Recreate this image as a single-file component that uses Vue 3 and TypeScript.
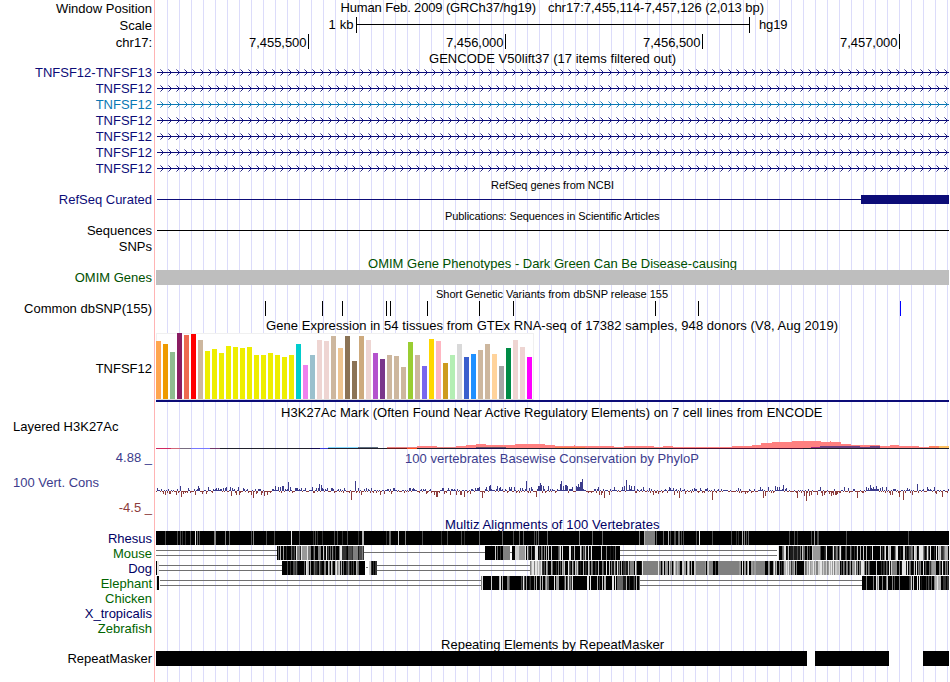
<script setup lang="ts">
type Block = [from: number, to: number, shades: string];

interface Species {
  name: string;
  color: string;
  blocks: Block[];
  double: [number, number][];
  single: [number, number][];
  marks: string;
}

const left = 156;
const right = 949;

const navy = "#0c0c78";
const green = "#005000";

// Cheap repeatable generator, so that the fine-grained tracks are stable between renders
function random(seed: number) {
  let s = seed;
  return () => {
    s = (s * 1103515245 + 12345) % 2147483648;
    return s / 2147483648;
  };
}

const genes = [
  { name: "TNFSF12-TNFSF13", color: navy },
  { name: "TNFSF12", color: "#0a78b4" },
  { name: "TNFSF12", color: navy },
];
const geneRows = [genes[0], genes[2], genes[1], genes[2], genes[2], genes[2], genes[2]];

const arrowTips = Array.from({ length: 99 }, (_, i) => 162 + i * 8);
const arrowHeads = arrowTips.map((x) => `M${x - 1} 6h1v1h-1zM${x} 7h1v1h-1zM${x} 9h1v1h-1zM${x - 1} 10h1v1h-1z`).join("");
const arrowTails = arrowTips.map((x) => `M${x - 2} 5h1v1h-1zM${x - 2} 11h1v1h-1z`).join("");

const rulerTicks = [
  { x: 308, label: "7,455,500" },
  { x: 505, label: "7,456,000" },
  { x: 702, label: "7,456,500" },
  { x: 899, label: "7,457,000" },
];

const snps = [265, 322, 342, 386, 390, 427, 479, 513, 655, 698];

const tissues = [
  "ffa54f:58", "ee9a00:55", "8fbc8f:47", "8b1c62:66", "ee6a50:64", "ff0000:65", "cdb79e:59",
  "eeee00:48", "eeee00:50", "eeee00:46", "eeee00:53", "eeee00:52", "eeee00:51", "eeee00:52",
  "eeee00:44", "eeee00:44", "eeee00:46", "eeee00:44", "eeee00:42", "eeee00:44", "00cdcd:55",
  "ee82ee:34", "9ac0cd:44", "eed5d2:59", "eed5d2:58", "cdb79e:63", "eec591:51", "8b7355:63",
  "8b7355:38", "cdaa7d:63", "eed5d2:59", "b452cd:46", "7a378b:40", "cdb79e:44", "cdb79e:43",
  "cdb79e:32", "9acd32:57", "cdb79e:44", "7a67ee:33", "ffd700:60", "ffb6c1:58", "cd9b1d:36",
  "b4eeb4:44", "d9d9d9:55", "3a5fcd:42", "1e90ff:45", "cdb79e:49", "cdb79e:55", "ffd39b:45",
  "a6a6a6:33", "008b45:51", "eed5d2:59", "eed5d2:52", "ff00ff:42",
].map((item, i) => {
  const [color, height] = item.split(":");
  return { x: left + i * 7, color: "#" + color, height: Number(height) };
});

// x, y, width, height, colour
const histone: [number, number, number, number, string][] = [
  [387, 29, 30, 1, "#e88080"],
  [417, 28, 20, 2, "#ff8080"],
  [437, 29, 19, 1, "#e88080"],
  [456, 28, 10, 2, "#ff8080"],
  [466, 27, 10, 3, "#ff8080"],
  [476, 26, 10, 4, "#ff8080"],
  [486, 27, 29, 3, "#ff8080"],
  [515, 26, 30, 4, "#ff8080"],
  [545, 27, 10, 3, "#ff8080"],
  [555, 28, 59, 2, "#ff8080"],
  [574, 27, 1, 1, "#ff8080"],
  [614, 29, 10, 1, "#ff8080"],
  [624, 28, 30, 2, "#ff8080"],
  [654, 29, 9, 1, "#ff8080"],
  [663, 28, 10, 2, "#ff8080"],
  [673, 29, 59, 1, "#ff8080"],
  [732, 28, 20, 2, "#ff8080"],
  [752, 27, 9, 3, "#ff8080"],
  [761, 25, 11, 5, "#ff8080"],
  [772, 24, 20, 6, "#ff8080"],
  [792, 23, 29, 7, "#ff8080"],
  [821, 24, 20, 6, "#ff8080"],
  [830, 23, 1, 1, "#ff8080"],
  [841, 26, 10, 4, "#ff8080"],
  [851, 27, 29, 3, "#ff8080"],
  [880, 28, 10, 2, "#ff8080"],
  [890, 27, 9, 3, "#ff8080"],
  [899, 28, 20, 2, "#ff8080"],
  [919, 29, 10, 1, "#ff8080"],
  [929, 28, 10, 2, "#ff8060"],
  [939, 28, 10, 2, "#ffc060"],
  [811, 29, 9, 1, "#a02880"],
  [820, 28, 40, 2, "#704080"],
  [860, 29, 10, 1, "#704080"],
  [870, 28, 10, 2, "#704080"],
  [328, 29, 30, 1, "#80d8ff"],
  [358, 29, 20, 1, "#607080"],
  [476, 29, 30, 1, "#6c5060"],
  [555, 29, 30, 1, "#ff8050"],
  [156, 30, 793, 1, "#20202c"],
  [156, 30, 15, 1, "#d02860"],
  [171, 30, 9, 1, "#d06878"],
  [180, 30, 11, 1, "#786c80"],
  [191, 30, 19, 1, "#7878ff"],
  [210, 30, 10, 1, "#703868"],
  [310, 30, 10, 1, "#140c50"],
  [320, 30, 8, 1, "#3c3cd8"],
  [387, 30, 20, 1, "#701c1c"],
  [407, 30, 10, 1, "#ff5020"],
  [466, 30, 40, 1, "#141048"],
  [673, 30, 130, 1, "#4c1030"],
];

const peaks: Record<number, number> = {
  163: -3, 165: -4, 169: -3, 170: -3, 176: -4, 180: 5, 181: -6, 183: -3, 187: -2, 195: -4, 198: 5,
  202: -3, 206: -3, 208: 4, 216: 3, 218: 3, 223: 3, 226: 4, 230: 4, 231: -5, 236: -4, 238: 4,
  239: -4, 243: 3, 251: -4, 253: -7, 256: -3, 261: -4, 264: -5, 267: -4, 275: 5, 278: 4, 280: 4,
  282: 5, 283: 5, 288: 9, 290: 4, 295: 3, 301: 3, 305: 3, 312: 4, 316: 3, 319: 7, 321: 6, 322: 3,
  327: 3, 332: 3, 351: -9, 355: 10, 361: -4, 371: 3, 380: -4, 384: -3, 391: -3, 413: 3, 426: -3,
  434: -4, 436: -6, 437: -6, 444: -3, 448: 3, 450: -4, 456: -4, 460: -4, 461: -4, 464: -6, 470: -3,
  475: 3, 479: 4, 482: -7, 486: 4, 489: 5, 490: 6, 497: 5, 500: 4, 509: 4, 511: 4, 514: 4, 520: 3,
  526: 10, 531: 4, 536: -6, 538: 5, 539: 5, 540: 8, 541: 6, 543: 5, 548: 5, 560: 7, 561: 10, 563: 5,
  565: 6, 566: 6, 567: 5, 572: 4, 576: 5, 577: 4, 578: 7, 579: 4, 580: 9, 581: 9, 582: 12, 598: 4,
  599: -4, 601: -4, 604: -7, 609: -4, 614: 4, 622: 4, 624: 5, 626: 11, 629: 6, 631: 5, 634: 5,
  643: 4, 653: -4, 658: -3, 669: 4, 674: -4, 679: -7, 685: -3, 700: 3, 712: -9, 738: 3, 745: -3,
  760: 4, 763: -7, 765: -5, 768: 4, 775: 5, 777: 4, 779: 4, 783: 6, 797: -7, 804: -5, 806: -10,
  809: -5, 811: -4, 817: -4, 820: 4, 822: -5, 824: -4, 829: -3, 831: -5, 833: -4, 835: -4, 836: -4,
  837: -3, 844: 4, 857: -7, 866: 4, 870: 6, 873: 4, 876: 5, 882: 4, 886: 4, 890: -4, 892: -4,
  899: -6, 903: -9, 907: 3, 912: -4, 917: 7, 927: 4, 934: 4, 936: -3, 942: -6,
};

const blocksUp: string[] = [];
const blocksDown: string[] = [];
const wiggle = random(17);
for (let x = left; x < right; x++) {
  const r = wiggle();
  const value = peaks[x] ?? (r < 0.3 ? 1 : r < 0.46 ? 2 : r < 0.52 ? 3 : r < 0.87 ? -1 : -2);
  if (value > 0) blocksUp.push(`M${x} ${25 - value}h1v${value}h-1z`);
  else blocksDown.push(`M${x} 25h1v${-value}h-1z`);
}
const conserved = blocksUp.join("");
const accelerated = blocksDown.join("");

// Shade digits run from 0 (black) to 9 (almost white)
const shade = (level: string | number) => {
  const v = Math.round(Number(level) * 25.5);
  return `rgb(${v}, ${v}, ${v})`;
};

const mixed = "00000000011223455789";
const species: Species[] = [
  {
    name: "Rhesus",
    color: "#000064",
    blocks: [[156, 949, "0"]],
    double: [],
    single: [],
    marks:
      "165:3 177:3 180:3 182:2 185:2 190:3 195:9 197:4 199:3 214+2:5 225:5 229:4 251:3 253:5 266:3 274:3 291:9 " +
      "299:3 313:2 315:3 317:2 322:2 334:3 337:3 342:2 347:3 358:2 362+2:7 386:2 389+2:4 398:8 405:5 422:3 441:2 " +
      "447:3 461:3 464:2 479:4 502:4 513:3 519:4 523:4 534:3 536:3 538:4 547:4 579:5 592:4 602:4 639:5 " +
      "644:7 645+10:5 656:4 663:4 668:7 670:3 674+2:3 678+2:4 681:3 683:3 696:3 699:9 712:3 731:3 736:2 738:2 " +
      "742:7 744:5 746:3 748:4 789:3 794:3 797:2 811:3 814:6 817+2:3 846:3 908:3",
  },
  {
    name: "Mouse",
    color: "#006400",
    blocks: [
      [277, 364, mixed],
      [485, 510, "0"],
      [512, 620, mixed],
      [778, 949, mixed],
    ],
    double: [
      [156, 277],
      [620, 777],
    ],
    single: [
      [364, 485],
      [510, 512],
    ],
    marks:
      "277:0 278:4 279:0 280:7 281+2:0 283:6 284+2:0 286:2 287+4:0 291:4 292+2:1 294:3 295:0 296:9 297+3:5 300:2 " +
      "301:9 302+5:6 307:9 308+3:5 311+2:0 313:2 314:5 315+2:0 318+3:5 339:5 340+2:9 343+3:2 348+4:3 353+5:5 " +
      "359+3:3 362:5 363:2 495:8 497:4 500:2 503+7:5 512+3:0 515+4:8 519+6:6 525:9 526:0 535+3:9 555:0 561:0 562:9 " +
      "563+6:0 569+2:9 575+5:0 580:9 588:9 778:9 785:9 790+10:1 793:3 797:3 802:8 812:8 813+7:6 820:3 826:9 833:9 " +
      "840:9 863:8 872:9 875+5:0 903+2:8 914:9 919+4:9 927:9 930:9 936:9 945+3:7",
  },
  {
    name: "Dog",
    color: "#000064",
    blocks: [
      [156, 157, "0"],
      [157, 159, "9"],
      [282, 365, mixed],
      [369, 377, "0258"],
      [530, 542, "579"],
      [542, 644, mixed],
      [644, 774, "000556678"],
      [774, 806, "0024567899"],
      [806, 840, "5667889"],
      [840, 870, "0035569"],
      [870, 949, mixed],
    ],
    double: [
      [159, 282],
      [377, 530],
    ],
    single: [[366, 368]],
    marks:
      "282+5:0 287:3 288+2:0 290:2 291+2:0 293+2:3 295:2 297:1 298+6:0 304:4 305:0 306:9 308:7 310:6 359+6:0 " +
      "630+4:5 635:9 637:0 642:9 643+15:5 658:9 674:9 688:9 696+9:5 706:0 709+4:5 713+5:0 715:3 718+21:5 " +
      "742:9 748:9 756+9:5 766+2:0 770+3:0 797+7:0 831:9 870+4:0 878+3:0 892+5:5 902+4:9 907:9 923:9 932+4:6",
  },
  {
    name: "Elephant",
    color: "#006400",
    blocks: [
      [156, 157, "9"],
      [157, 159, "0"],
      [481, 482, "5"],
      [482, 483, "9"],
      [483, 640, "0000000000000123579"],
      [862, 949, "0000000000012358"],
    ],
    double: [
      [160, 481],
      [640, 862],
    ],
    single: [],
    marks:
      "483+8:0 491:8 492+7:0 500:9 502:7 507+2:5 510+12:0 521:3 523:9 526:6 547+2:4 556+3:6 572:9 573+14:0 587+2:9 " +
      "597:7 602:8 606+6:0 612:9 615:9 617+6:4 623+3:1 636:7 637+2:0 639:4 862+4:0 876:9 878:8 886:5 900+8:0 " +
      "917:9 919:9 928:3 931:4 935+6:7 937:9 943+3:2",
  },
  { name: "Chicken", color: "#006400", blocks: [], double: [], single: [], marks: "" },
  { name: "X_tropicalis", color: "#000064", blocks: [], double: [], single: [], marks: "" },
  { name: "Zebrafish", color: "#006400", blocks: [], double: [], single: [], marks: "" },
];

const alignments = species.map((item, row) => {
  const next = random(101 + row * 37);
  const rects: { x: number; width: number; fill: string }[] = [];
  for (const [from, to, shades] of item.blocks) {
    if (shades.length === 1) {
      rects.push({ x: from, width: to - from, fill: shade(shades) });
      continue;
    }
    for (let x = from; x < to; x++) {
      rects.push({ x, width: 1, fill: shade(shades[Math.floor(next() * shades.length)]) });
    }
  }
  for (const mark of item.marks.split(" ").filter(Boolean)) {
    const [place, level] = mark.split(":");
    const [x, width = "1"] = place.split("+");
    rects.push({ x: Number(x), width: Number(width), fill: shade(level) });
  }
  return { ...item, rects };
});

const repeats = [
  [156, 807],
  [815, 889],
  [923, 949],
];
</script>

<template>
  <main class="browser">
    <div class="row" style="height: 17px">
      <div class="label">Window Position</div>
      <svg class="plot" viewBox="155 0 794 17" height="17">
        <text x="340.5" y="12" textLength="195.5">Human Feb. 2009 (GRCh37/hg19)</text>
        <text x="548" y="12" textLength="216">chr17:7,455,114-7,457,126 (2,013 bp)</text>
      </svg>
    </div>
    <div class="row" style="height: 17px">
      <div class="label">Scale</div>
      <svg class="plot" viewBox="155 17 794 17" height="17">
        <text x="328.5" y="29" textLength="25">1 kb</text>
        <path d="M356 17h1v7h392v-7h1v16h-1v-8h-392v8h-1z" />
        <text x="759" y="29" textLength="28.5">hg19</text>
      </svg>
    </div>
    <div class="row" style="height: 17px">
      <div class="label">chr17:</div>
      <svg class="plot" viewBox="155 34 794 17" height="17">
        <template v-for="tick in rulerTicks" :key="tick.x">
          <text :x="tick.x - 59" y="47" textLength="57.5">{{ tick.label }}</text>
          <rect :x="tick.x" y="34" width="1" height="15" />
        </template>
      </svg>
    </div>

    <div class="row title" style="height: 13px">
      <svg class="plot" viewBox="155 0 794 13" height="13">
        <text x="429" y="12" textLength="247">GENCODE V50lift37 (17 items filtered out)</text>
      </svg>
    </div>
    <div v-for="(gene, i) in geneRows" :key="i" class="row" style="height: 16px" :style="{ color: gene.color }">
      <div class="label">{{ gene.name }}</div>
      <svg class="plot" viewBox="155 0 794 16" height="16">
        <path :d="arrowTails" opacity="0.5" />
        <path :d="arrowHeads" opacity="0.9" />
        <rect x="157" y="8" width="792" height="1" />
      </svg>
    </div>

    <div class="row title" style="height: 15px">
      <svg class="plot small" viewBox="155 0 794 15" height="15">
        <text x="491" y="13" textLength="123">RefSeq genes from NCBI</text>
      </svg>
    </div>
    <div class="row navy" style="height: 16px">
      <div class="label">RefSeq Curated</div>
      <svg class="plot" viewBox="155 0 794 16" height="16">
        <rect x="157" y="8" width="704" height="1" />
        <rect x="861" y="4" width="88" height="9" />
      </svg>
    </div>

    <div class="row title" style="height: 15px">
      <svg class="plot small" viewBox="155 0 794 15" height="15">
        <text x="445" y="13" textLength="214.5">Publications: Sequences in Scientific Articles</text>
      </svg>
    </div>
    <div class="row" style="height: 16px">
      <div class="label">Sequences</div>
      <svg class="plot" viewBox="155 0 794 16" height="16">
        <rect x="157" y="8" width="792" height="1" />
      </svg>
    </div>
    <div class="row" style="height: 16px">
      <div class="label">SNPs</div>
    </div>

    <div class="row title" style="height: 15px" :style="{ color: green }">
      <svg class="plot" viewBox="155 0 794 15" height="15">
        <text x="368" y="14" textLength="369">OMIM Gene Phenotypes - Dark Green Can Be Disease-causing</text>
      </svg>
    </div>
    <div class="row" style="height: 16px" :style="{ color: green }">
      <div class="label">OMIM Genes</div>
      <svg class="plot" viewBox="155 0 794 16" height="16">
        <rect x="156" y="1" width="793" height="15" fill="#bebebe" />
      </svg>
    </div>

    <div class="row title" style="height: 15px">
      <svg class="plot small" viewBox="155 0 794 15" height="15">
        <text x="436" y="13" textLength="232">Short Genetic Variants from dbSNP release 155</text>
      </svg>
    </div>
    <div class="row" style="height: 16px">
      <div class="label">Common dbSNP(155)</div>
      <svg class="plot" viewBox="155 0 794 16" height="16">
        <rect v-for="x in snps" :key="x" :x="x" y="1" width="1" height="15" />
        <rect x="900" y="1" width="1" height="15" fill="#00f" />
      </svg>
    </div>

    <div class="row title" style="height: 17px">
      <svg class="plot" viewBox="155 0 794 17" height="17">
        <text x="266" y="14" textLength="572">
          Gene Expression in 54 tissues from GTEx RNA-seq of 17382 samples, 948 donors (V8, Aug 2019)
        </text>
      </svg>
    </div>
    <div class="row" style="height: 70px">
      <div class="label expression">TNFSF12</div>
      <svg class="plot" viewBox="155 0 794 70" height="70">
        <rect x="156.5" y="0.5" width="377" height="66" fill="#fff" stroke="#f0f0f0" />
        <rect x="156" y="66" width="377" height="1" fill="#dcdcdc" />
        <rect
          v-for="bar in tissues"
          :key="bar.x"
          :x="bar.x"
          :y="66 - bar.height"
          width="5"
          :height="bar.height"
          :fill="bar.color"
        />
        <rect x="156" y="67" width="793" height="2" fill="#0c0c78" />
      </svg>
    </div>

    <div class="row title" style="height: 15px">
      <svg class="plot" viewBox="155 0 794 15" height="15">
        <text x="281" y="14" textLength="541.5">
          H3K27Ac Mark (Often Found Near Active Regulatory Elements) on 7 cell lines from ENCODE
        </text>
      </svg>
    </div>
    <div class="row" style="height: 31px">
      <div class="label start">Layered H3K27Ac</div>
      <svg class="plot" viewBox="155 0 794 31" height="31">
        <rect
          v-for="([x, y, width, height, fill], i) in histone"
          :key="i"
          :x="x"
          :y="y"
          :width="width"
          :height="height"
          :fill="fill"
        />
      </svg>
    </div>

    <div class="row blue" style="height: 17px">
      <div class="label">4.88 _</div>
      <svg class="plot" viewBox="155 0 794 17" height="17">
        <text x="405" y="14" textLength="294">100 vertebrates Basewise Conservation by PhyloP</text>
      </svg>
    </div>
    <div class="row" style="height: 52px">
      <div class="label conservation">
        <div class="start blue">100 Vert. Cons</div>
        <div class="red">-4.5 _</div>
      </div>
      <svg class="plot" viewBox="155 0 794 52" height="52">
        <path :d="conserved" fill="#3c3c8c" />
        <path :d="accelerated" fill="#8c3c3c" />
      </svg>
    </div>

    <div class="row title" style="height: 12px; color: #000064">
      <svg class="plot" viewBox="155 0 794 12" height="12">
        <text x="445" y="11" textLength="214.5">Multiz Alignments of 100 Vertebrates</text>
      </svg>
    </div>
    <div v-for="item in alignments" :key="item.name" class="row" style="height: 15px">
      <div class="label" :style="{ color: item.color }">{{ item.name }}</div>
      <svg class="plot" viewBox="155 0 794 15" height="15">
        <g fill="#707070">
          <template v-for="[from, to] in item.double" :key="from">
            <rect :x="from" y="5" :width="to - from" height="1" />
            <rect :x="from" y="10" :width="to - from" height="1" />
          </template>
          <rect v-for="[from, to] in item.single" :key="from" :x="from" y="7" :width="to - from" height="1" />
        </g>
        <rect
          v-for="(stripe, i) in item.rects"
          :key="i"
          :x="stripe.x"
          y="1"
          :width="stripe.width"
          height="14"
          :fill="stripe.fill"
        />
      </svg>
    </div>

    <div class="row title" style="height: 15px">
      <svg class="plot" viewBox="155 0 794 15" height="15">
        <text x="441" y="14" textLength="223">Repeating Elements by RepeatMasker</text>
      </svg>
    </div>
    <div class="row" style="height: 16px">
      <div class="label">RepeatMasker</div>
      <svg class="plot" viewBox="155 0 794 16" height="16">
        <rect v-for="[from, to] in repeats" :key="from" :x="from" y="1" :width="to - from" height="15" />
      </svg>
    </div>
  </main>
</template>

<style>
body {
  background: #fff;
}
</style>

<style scoped>
.browser {
  width: 949px;
  height: 682px;
  overflow: hidden;
  color: #000;
  font: 13px "Liberation Sans", Arial, sans-serif;
  background:
    linear-gradient(to right, #fff 154px, #ffb4b4 154px, #ffb4b4 155px, #fff 155px, #fff 167px, transparent 167px),
    linear-gradient(to right, #dcdcfa 1px, transparent 1px) 11px 0 / 12px 100%;
}

.row {
  display: flex;
  align-items: flex-start;
}

.title {
  justify-content: flex-end;
}

.label {
  flex: none;
  width: 152px;
  margin-right: 3px;
  line-height: 17px;
  text-align: right;
  white-space: nowrap;
}

.start {
  padding-left: 13px;
  text-align: left;
  box-sizing: border-box;
}

.expression {
  padding-top: 27px;
}

.conservation {
  display: flex;
  flex-direction: column;
  gap: 8px;
  padding-top: 8px;
}

.plot {
  flex: none;
  width: 794px;
  overflow: visible;
  fill: currentColor;
}

.small {
  font-size: 11px;
}

.navy {
  color: #0c0c78;
}

.blue {
  color: #3c3c8c;
}

.red {
  color: #8c3c3c;
}
</style>
